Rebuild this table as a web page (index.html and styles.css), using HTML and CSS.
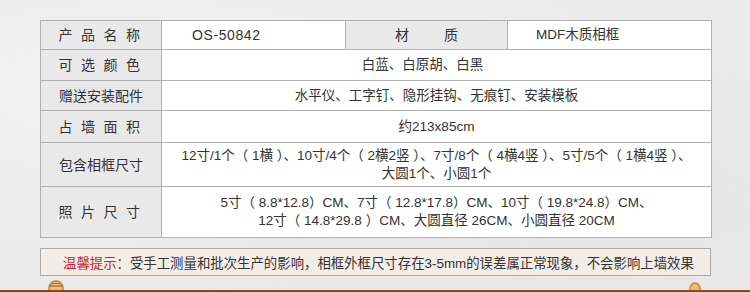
FILE: index.html
```html
<!DOCTYPE html>
<html lang="zh-CN">
<head>
<meta charset="utf-8">
<title>产品参数</title>
<link rel="stylesheet" href="styles.css">
</head>
<body>
<div class="page">
  <div class="spec">
    <div class="cell h spaced">产品名称</div>
    <div class="cell v left1 code">OS-50842</div>
    <div class="cell h wide-spaced">材质</div>
    <div class="cell v left2">MDF木质相框</div>

    <div class="cell h spaced">可选颜色</div>
    <div class="cell v span shift">白蓝、白原胡、白黑</div>

    <div class="cell h">赠送安装配件</div>
    <div class="cell v span">水平仪、工字钉、隐形挂钩、无痕钉、安装模板</div>

    <div class="cell h spaced">占墙面积</div>
    <div class="cell v span">约213x85cm</div>

    <div class="cell h">包含相框尺寸</div>
    <div class="cell v span multi">12寸/1个（ 1横 ）、10寸/4个（ 2横2竖 ）、7寸/8个（ 4横4竖 ）、5寸/5个（ 1横4竖 ）、<br>大圆1个、小圆1个</div>

    <div class="cell h spaced">照片尺寸</div>
    <div class="cell v span multi">5寸（ 8.8*12.8）CM、7寸（ 12.8*17.8）CM、10寸（ 19.8*24.8）CM、<br>12寸（ 14.8*29.8 ）CM、大圆直径 26CM、小圆直径 20CM</div>
  </div>

  <div class="notice"><span class="tip">温馨提示：</span>受手工测量和批次生产的影响，相框外框尺寸存在3-5mm的误差属正常现象，不会影响上墙效果</div>
</div>
<div class="floor">
  <svg class="knob knob-left" width="18" height="10" viewBox="0 0 18 10">
    <path d="M1 10 C1 3 5 0 9 0 C13 0 17 3 17 10 Z" fill="#c8954a"/>
    <path d="M3 10 C3 5 6 2 9 2 C12 2 15 5 15 10 Z" fill="#e6c07a"/>
    <path d="M2 6 H16" stroke="#8a5a22" stroke-width="1"/>
    <path d="M5 3.5 H13" stroke="#a8743a" stroke-width="1"/>
  </svg>
  <svg class="knob knob-right" width="14" height="8" viewBox="0 0 14 8">
    <path d="M1 8 C1 3 4 0 7 0 C10 0 13 3 13 8 Z" fill="#c8954a"/>
    <path d="M3 8 C3 4 5 2 7 2 C9 2 11 4 11 8 Z" fill="#e6c07a"/>
  </svg>
</div>
</body>
</html>
```

FILE: styles.css
```css
html, body {
  margin: 0;
  padding: 0;
}

body {
  width: 750px;
  height: 292px;
  overflow: hidden;
  background: #ebebeb;
  background-image:
    radial-gradient(ellipse at 20% 30%, rgba(255,255,255,0.35), transparent 60%),
    radial-gradient(ellipse at 80% 70%, rgba(210,210,210,0.25), transparent 60%);
  font-family: "Liberation Sans", "Noto Sans CJK SC", sans-serif;
  color: #333;
  position: relative;
}

.page {
  padding: 20px 0 0 40px;
}

.spec {
  display: grid;
  grid-template-columns: 120px 183px 161px 203px;
  grid-template-rows: 28px 30px 29px 31px 43px 50px;
  gap: 1px;
  width: max-content;
  background: #b1b1b1;
  border: 1px solid #b1b1b1;
}

.cell {
  display: flex;
  align-items: center;
  font-size: 13.5px;
  line-height: 18px;
  white-space: nowrap;
}

.h {
  background: #e9e9e9;
  justify-content: center;
  font-size: 14px;
  color: #333;
}

.spaced {
  letter-spacing: 8.5px;
  padding-left: 5px;
}

.wide-spaced {
  letter-spacing: 35px;
  padding-left: 35px;
}

.v {
  background: #fff;
}

.left1 {
  padding-left: 30px;
}

.code {
  font-size: 14px;
  letter-spacing: 0.6px;
}

.left2 {
  padding-left: 28px;
}

.span {
  grid-column: 2 / 5;
  justify-content: center;
  text-align: center;
}

.shift {
  padding-right: 28px;
}

.multi {
  white-space: normal;
}

.notice {
  margin-top: 10px;
  height: 26px;
  border: 1px solid #ababab;
  background: #f3ede7;
  display: flex;
  align-items: center;
  padding-left: 22px;
  box-sizing: content-box;
  width: 647px;
  font-size: 13.4px;
  color: #333;
  white-space: nowrap;
}

.tip {
  color: #c0272d;
}

.floor {
  position: absolute;
  left: 0;
  right: 0;
  bottom: 0;
  height: 2px;
  background: linear-gradient(#a2521f, #7a3a12);
}

.knob {
  position: absolute;
  bottom: 2px;
}

.knob-left {
  left: 47px;
}

.knob-right {
  left: 688px;
}
```
